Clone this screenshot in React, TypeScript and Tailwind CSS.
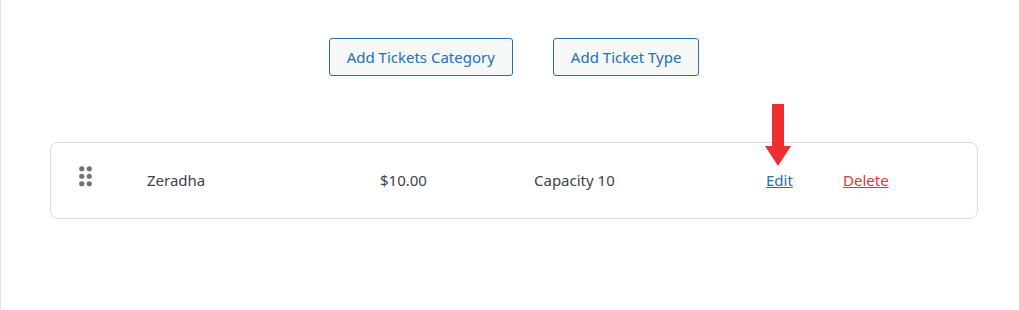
import React from "react";

const font = { fontFamily: '"Noto Sans", "Open Sans", Arial, sans-serif' };

function DragHandle() {
  return (
    <svg width="14" height="21" viewBox="0 0 14 21" className="block">
      {[0, 1, 2].map((r) =>
        [0, 1].map((c) => (
          <circle key={`${r}-${c}`} cx={2.75 + c * 7.5} cy={2.75 + r * 7.5} r="2.6" fill="#6c727a" />
        ))
      )}
    </svg>
  );
}

export default function App() {
  return (
    <div className="w-[1019px] h-[310px] bg-white border-l border-[#e4e4e4]" style={font}>
      <div className="pl-[49px] pr-[41px]">
        <div className="flex justify-center gap-[40px] pt-[38px]">
          <button className="h-[38px] px-[17px] rounded-[3px] border border-[#2271b1] bg-[#f6f7f7] text-[#2271b1] text-[15px] leading-none">
            Add Tickets Category
          </button>
          <button className="h-[38px] px-[17px] rounded-[3px] border border-[#2271b1] bg-[#f6f7f7] text-[#2271b1] text-[15px] leading-none">
            Add Ticket Type
          </button>
        </div>
        <div className="relative mt-[66px] h-[77px] rounded-[8px] border border-[#dcdcde] flex items-center pl-[28px] text-[15px] text-[#3c434a]">
          <div className="w-[68px] flex items-center -mt-[8px]">
            <DragHandle />
          </div>
          <div className="w-[233px]">Zeradha</div>
          <div className="w-[154px]">$10.00</div>
          <div className="w-[232px]">Capacity 10</div>
          <div className="w-[77px]">
            <a href="#" className="text-[#2271b1] underline">Edit</a>
          </div>
          <div>
            <a href="#" className="text-[#e3343a] underline">Delete</a>
          </div>
          <svg
            className="absolute left-[713px] top-[-39px]"
            width="28"
            height="62"
            viewBox="0 0 28 62"
          >
            <path d="M8 0 H20 V42 H27 L14 62 L1 42 H8 Z" fill="#ee2e31" />
          </svg>
        </div>
      </div>
    </div>
  );
}
